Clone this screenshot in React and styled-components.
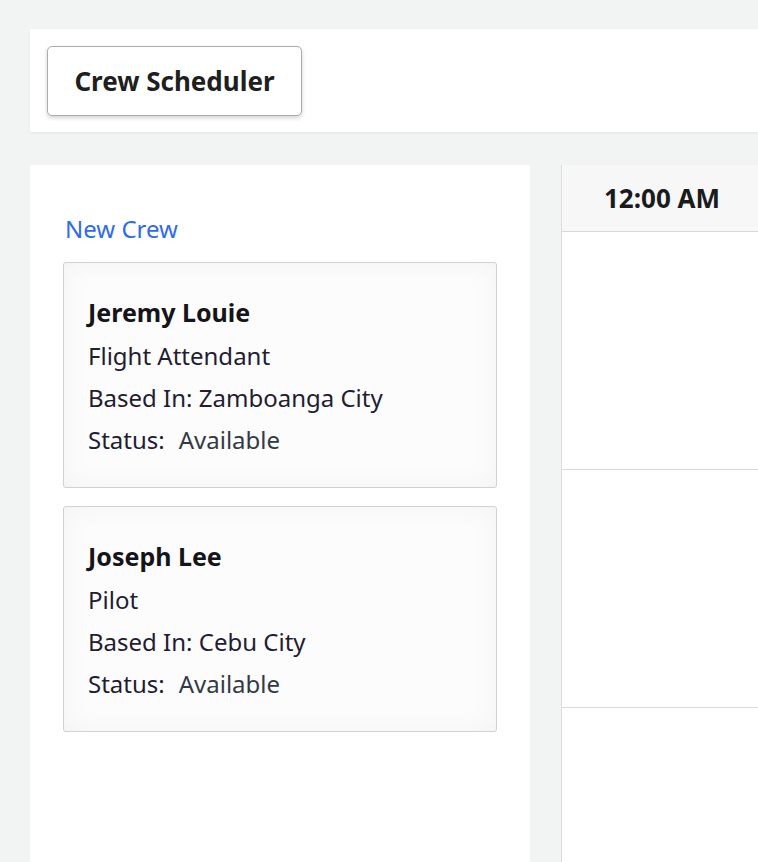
import React from "react";
import styled, { createGlobalStyle } from "styled-components";

const Global = createGlobalStyle`
  html, body { margin: 0; padding: 0; background: #f2f3f3; overflow: hidden; }
  body { font-family: "Noto Sans", "Open Sans", sans-serif; color: #212529; }
`;

const Page = styled.div`
  width: 1200px;
  padding: 29px 0 0 30px;
  display: flex;
  flex-direction: column;
  gap: 33px;
`;

const Header = styled.header`
  background: #fff;
  height: 103px;
  padding: 0 17px;
  display: flex;
  align-items: center;
  box-shadow: 0 1px 3px rgba(0, 0, 0, 0.06);
`;

const TitleButton = styled.button`
  height: 70px;
  width: 255px;
  margin-top: 1px;
  padding: 0;
  background: #fff;
  border: 1px solid #a9acb0;
  border-radius: 5px;
  box-shadow: 0 2px 4px rgba(0, 0, 0, 0.18);
  font-family: "Noto Sans", sans-serif;
  font-weight: 700;
  font-size: 26px;
  color: #1e1f21;
  cursor: pointer;
`;

const Body = styled.div`
  display: flex;
  gap: 31px;
  align-items: flex-start;
`;

const CrewPanel = styled.section`
  width: 500px;
  min-height: 720px;
  background: #fff;
  padding: 46px 33px 0;
  box-sizing: border-box;
  display: flex;
  flex-direction: column;
`;

const NewCrewLink = styled.a`
  color: #2f6bf2;
  font-size: 24px;
  text-decoration: none;
  line-height: 36px;
  margin-left: 2px;
  margin-bottom: 15px;
  cursor: pointer;
`;

const CardList = styled.div`
  display: flex;
  flex-direction: column;
  gap: 18px;
`;

const Card = styled.div`
  border: 1px solid #cfd1d4;
  border-radius: 3px;
  background: #fcfcfc;
  padding: 31px 24px 26px;
  box-shadow: inset 0 0 28px rgba(0, 0, 0, 0.04);
  display: flex;
  flex-direction: column;
`;

const Name = styled.div`
  font-weight: 700;
  font-size: 25px;
  color: #15141a;
  line-height: 36px;
  margin-bottom: 5px;
`;

const Line = styled.div`
  font-size: 24px;
  line-height: 42px;
  color: #231d33;
`;

const StatusValue = styled.span`
  color: #333a45;
  margin-left: 14px;
`;

const Schedule = styled.section`
  width: 600px;
  background: #fff;
  border-left: 1px solid #dcdde0;
  display: flex;
  flex-direction: column;
`;

const TimeHeader = styled.div`
  width: 200px;
  height: 66px;
  background: #f7f7f7;
  border-bottom: 1px solid #d9dadd;
  display: flex;
  align-items: center;
  justify-content: center;
  font-weight: 700;
  font-size: 26px;
  color: #1a1b1d;
`;

const Slot = styled.div`
  height: 237px;
  border-bottom: 1px solid #d9dadd;
`;

const crew = [
  { name: "Jeremy Louie", role: "Flight Attendant", base: "Zamboanga City", status: "Available" },
  { name: "Joseph Lee", role: "Pilot", base: "Cebu City", status: "Available" },
];

export default function App() {
  return (
    <>
      <Global />
      <Page>
        <Header>
          <TitleButton>Crew Scheduler</TitleButton>
        </Header>
        <Body>
          <CrewPanel>
            <NewCrewLink>New Crew</NewCrewLink>
            <CardList>
              {crew.map((c) => (
                <Card key={c.name}>
                  <Name>{c.name}</Name>
                  <Line>{c.role}</Line>
                  <Line>Based In: {c.base}</Line>
                  <Line>
                    Status:<StatusValue>{c.status}</StatusValue>
                  </Line>
                </Card>
              ))}
            </CardList>
          </CrewPanel>
          <Schedule>
            <TimeHeader>12:00 AM</TimeHeader>
            <Slot />
            <Slot />
            <Slot />
          </Schedule>
        </Body>
      </Page>
    </>
  );
}
